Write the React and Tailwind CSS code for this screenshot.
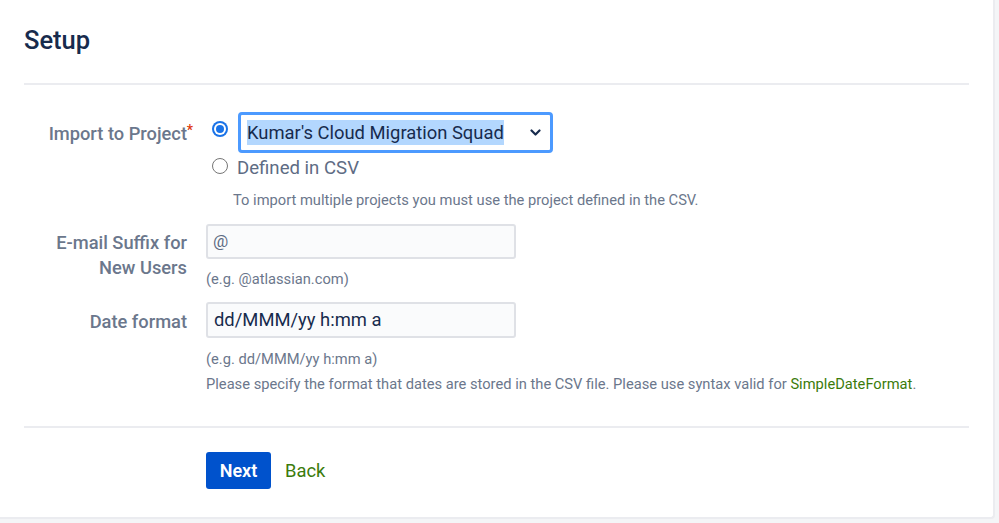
import React from "react";

const font = { fontFamily: "Roboto, 'Noto Sans', sans-serif" };

function Radio({ checked }) {
  if (checked) {
    return (
      <span className="flex h-4 w-4 shrink-0 items-center justify-center rounded-full bg-[#1a73e8]">
        <span className="flex h-[12px] w-[12px] items-center justify-center rounded-full bg-white">
          <span className="block h-[8px] w-[8px] rounded-full bg-[#1a73e8]" />
        </span>
      </span>
    );
  }
  return <span className="block h-4 w-4 shrink-0 rounded-full border border-[#767676] bg-white" />;
}

function Label({ children, required }) {
  return (
    <div className="relative w-[163px] shrink-0 text-right text-[18.3px] font-medium leading-[25px] text-[#6b778c]">
      {children}
      {required && (
        <span className="absolute -right-[6px] -top-[3px] text-[14px] text-[#de350b]">*</span>
      )}
    </div>
  );
}

export default function App() {
  return (
    <div className="h-[523px] w-full bg-[#f4f5f7] pr-[4px] pb-[4px]" style={font}>
      <div className="h-full rounded-br-[4px] border-r-2 border-b-2 border-[#ebecf0] bg-white pl-6 pr-[24px]">
        <h1 className="pt-[24px] text-[25.5px] font-medium leading-[32px] text-[#172b4d]">Setup</h1>
        <div className="mt-[27px] h-[2px] bg-[#ebecf0]" />

        {/* Import to Project */}
        <div className="mt-[27px] flex gap-[19px]">
          <div className="pt-[9px]">
            <Label required>Import to Project</Label>
          </div>
          <div className="flex flex-col">
            <div className="flex items-start">
              <div className="ml-[6px] mt-[9px]">
                <Radio checked />
              </div>
              <div className="ml-[10px] flex h-[41px] w-[315px] items-center justify-between rounded-[4px] border-[3px] border-[#4c9aff] bg-white pl-[6px] pr-[9px]">
                <span className="bg-[#b3d7fe] text-[18.4px] leading-[25px] text-[#172b4d]">
                  Kumar's Cloud Migration Squad
                </span>
                <svg width="11" height="8" viewBox="0 0 11 8" fill="none">
                  <path d="M1.5 1.5l4 4 4-4" stroke="#172b4d" strokeWidth="2.2" strokeLinecap="round" strokeLinejoin="round" />
                </svg>
              </div>
            </div>
            <div className="mt-[2px] flex items-start">
              <div className="ml-[6px] mt-[3px]">
                <Radio />
              </div>
              <span className="ml-[9px] text-[18.6px] leading-[26px] text-[#5e6c84]">Defined in CSV</span>
            </div>
            <div className="ml-[27px] mt-[9px] text-[14.7px] leading-[20px] text-[#6b778c]">
              To import multiple projects you must use the project defined in the CSV.
            </div>
          </div>
        </div>

        {/* E-mail suffix */}
        <div className="mt-[14px] flex gap-[19px]">
          <div className="pt-[6px]">
            <Label>
              E-mail Suffix for
              <br />
              New Users
            </Label>
          </div>
          <div className="flex flex-col">
            <div className="flex h-[35px] w-[310px] items-center rounded-[3px] border-2 border-[#dfe1e6] bg-[#fafbfc] px-[5px] text-[17px] text-[#5e6c84]">
              @
            </div>
            <div className="mt-[10px] text-[14.7px] leading-[20px] text-[#6b778c]">(e.g. @atlassian.com)</div>
          </div>
        </div>

        {/* Date format */}
        <div className="mt-[13px] flex gap-[19px]">
          <div className="pt-[7px]">
            <Label>Date format</Label>
          </div>
          <div className="flex flex-col">
            <div className="flex h-[36px] w-[310px] items-center rounded-[3px] border-2 border-[#dfe1e6] bg-[#fafbfc] px-[6px] text-[18.4px] text-[#172b4d]">
              dd/MMM/yy h:mm a
            </div>
            <div className="mt-[11px] text-[14.7px] leading-[20px] text-[#6b778c]">(e.g. dd/MMM/yy h:mm a)</div>
            <div className="mt-[5px] text-[14.7px] leading-[20px] text-[#6b778c]">
              Please specify the format that dates are stored in the CSV file. Please use syntax valid for{" "}
              <a className="text-[#3b7b0b]">SimpleDateFormat</a>.
            </div>
          </div>
        </div>

        <div className="mt-[32px] h-[2px] bg-[#ebecf0]" />

        <div className="ml-[182px] mt-[24px] flex items-center gap-[14px]">
          <button className="h-[37px] w-[65px] rounded-[3px] bg-[#0052cc] text-[18px] font-semibold text-white">
            Next
          </button>
          <a className="text-[18.4px] text-[#3b7b0b]">Back</a>
        </div>
      </div>
    </div>
  );
}
